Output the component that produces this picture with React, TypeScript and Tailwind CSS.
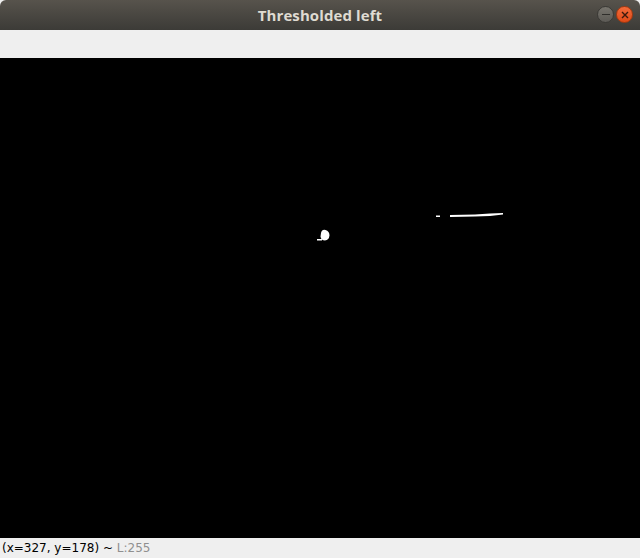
export default function App() {
  return (
    <div className="flex h-[558px] w-[640px] flex-col overflow-hidden bg-[#efefef] font-['DejaVu_Sans',sans-serif]">
      {/* title bar */}
      <div className="relative flex h-[30px] shrink-0 items-center justify-center rounded-t-[6px] bg-gradient-to-b from-[#57534c] to-[#3c3b37]">
        <span className="text-[15px] font-bold tracking-[0.1px] text-[#dfdbd2] font-['Open_Sans',sans-serif]">
          Thresholded left
        </span>
        <div className="absolute right-[7px] top-[6px] flex items-center gap-[2px]">
          <span className="flex h-[17px] w-[17px] items-center justify-center rounded-full bg-gradient-to-b from-[#77746d] to-[#5c5a55] border border-[#3a3935]">
            <span className="h-[1.5px] w-[8px] bg-[#2f2e2b]" />
          </span>
          <span className="flex h-[17px] w-[17px] items-center justify-center rounded-full bg-gradient-to-b from-[#f26b3a] to-[#df4a16] border border-[#a7390f]">
            <svg width="8" height="8" viewBox="0 0 8 8">
              <path d="M1 1 L7 7 M7 1 L1 7" stroke="#3a1a0d" strokeWidth="1.4" />
            </svg>
          </span>
        </div>
      </div>
      {/* toolbar */}
      <div className="h-[28px] shrink-0 bg-[#efefef]" />
      {/* image */}
      <div className="h-[480px] shrink-0 bg-black">
        <svg width="640" height="480" viewBox="0 0 640 480">
          <path d="M321 175 Q322 171 325.5 172 Q329.5 173 329.5 177.5 Q329 182 325 182.5 Q321 182.5 320.5 178.5 Z" fill="#fff" />
          <rect x="317" y="181" width="5" height="1.5" fill="#fff" />
          <rect x="436" y="157.5" width="4" height="1.5" fill="#fff" />
          <path d="M450 157 L475 156.5 L490 155.5 L503 155 L503 156.5 L490 158 L475 158.5 L450 159 Z" fill="#fff" />
        </svg>
      </div>
      {/* status bar */}
      <div className="flex h-[20px] items-center px-[2px] text-[12px] text-black">
        <span>(x=327, y=178) ~&nbsp;</span>
        <span className="text-[#8f8f8f]">L:255</span>
      </div>
    </div>
  );
}
